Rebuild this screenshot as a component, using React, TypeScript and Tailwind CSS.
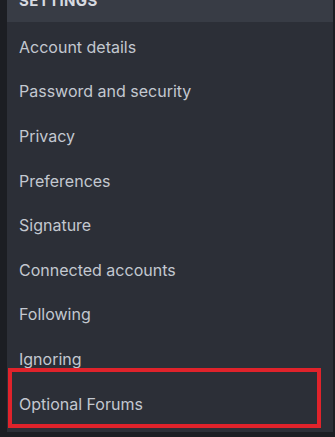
const items = [
  "Account details",
  "Password and security",
  "Privacy",
  "Preferences",
  "Signature",
  "Connected accounts",
  "Following",
  "Ignoring",
  "Optional Forums",
];

export default function App() {
  return (
    <div className="w-[335px] h-[437px] bg-[#1c1e23] pl-[7px] pr-[2px] pb-[5px] overflow-hidden" style={{ fontFamily: "Inter, 'Noto Sans', sans-serif" }}>
      <div className="relative h-full bg-[#2c2f37] flex flex-col">
        <div className="h-[22px] bg-[#383c45] overflow-hidden pl-[12px]">
          <div className="-mt-[9px] text-[15px] font-bold leading-[20px] tracking-wide text-[#d7dae0]">SETTINGS</div>
        </div>
        <div className="flex flex-col pt-[2.5px]">
          {items.map((item) => (
            <div key={item} className="h-[44.6px] flex items-center pl-[12px] text-[16px] text-[#c3c8d0]">
              {item}
            </div>
          ))}
        </div>
        {/* highlight annotation */}
        <div className="absolute left-[1px] top-[368px] w-[313px] h-[60px] border-[4px] border-[#e0232b]" />
      </div>
    </div>
  );
}
